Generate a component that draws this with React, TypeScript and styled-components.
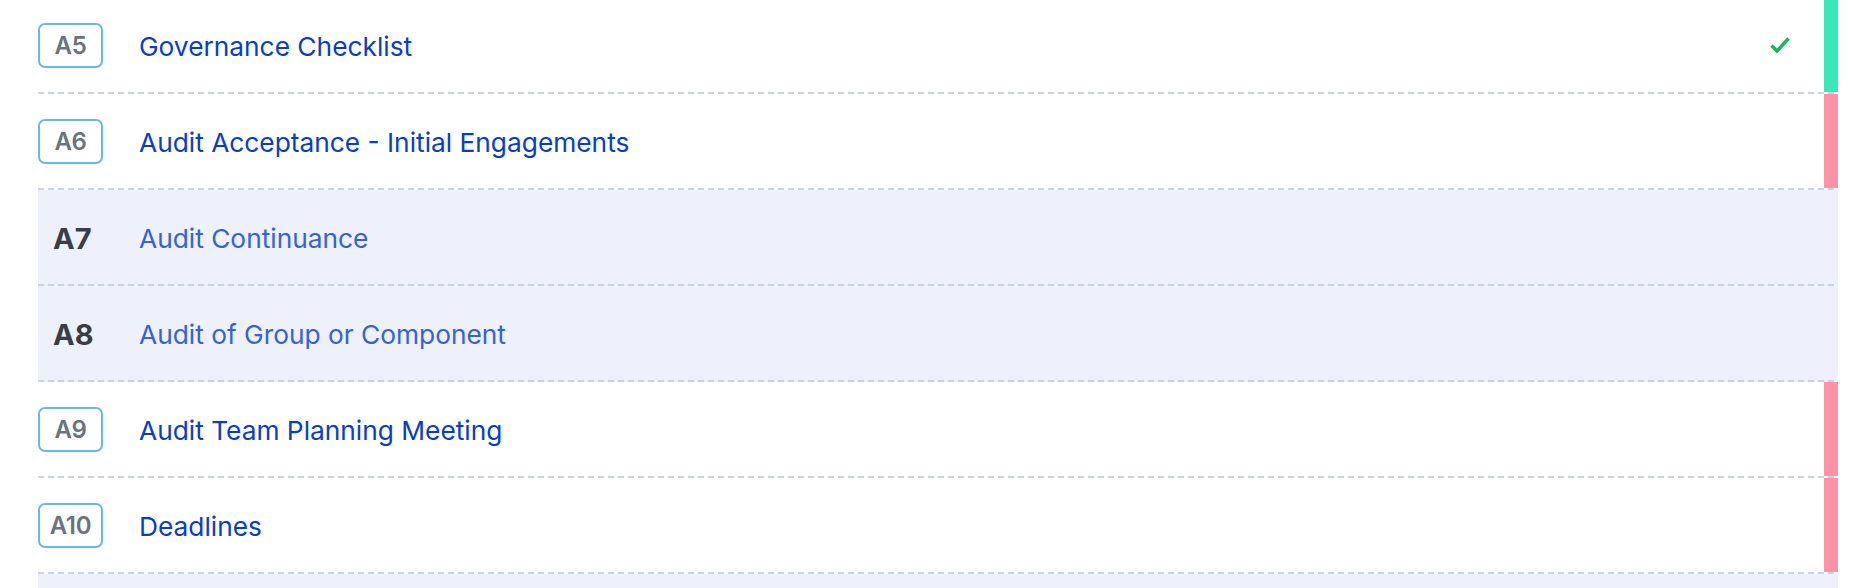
import React from "react"
import styled, { createGlobalStyle } from "styled-components"

const GlobalStyle = createGlobalStyle`
  html, body {
    margin: 0;
    padding: 0;
    background: #ffffff;
    overflow: hidden;
  }
  body {
    font-family: Inter, "Noto Sans", "Liberation Sans", sans-serif;
  }
`

type Status = "done" | "pending" | "none"

type Item = {
  code: string
  title: string
  group?: boolean
  status: Status
}

const items: Item[] = [
  { code: "A5", title: "Governance Checklist", status: "done" },
  { code: "A6", title: "Audit Acceptance - Initial Engagements", status: "pending" },
  { code: "A7", title: "Audit Continuance", group: true, status: "none" },
  { code: "A8", title: "Audit of Group or Component", group: true, status: "none" },
  { code: "A9", title: "Audit Team Planning Meeting", status: "pending" },
  { code: "A10", title: "Deadlines", status: "pending" },
  // next group row, only its top edge is visible
  { code: "", title: "", group: true, status: "none" },
]

const CheckIcon = () => (
  <svg width="20" height="18" viewBox="0 0 20 18" fill="none">
    <path
      d="M1.5 9.5 L7 15 L18.5 2.5"
      stroke="#14b85a"
      strokeWidth="3.4"
      strokeLinecap="butt"
      strokeLinejoin="miter"
    />
  </svg>
)

const App = () => {
  return (
    <>
      <GlobalStyle />
      <List>
        {items.map((item, i) => (
          <Row key={item.code || i} group={item.group}>
            <KeyCell>
              {item.group ? (
                <GroupCode>{item.code}</GroupCode>
              ) : (
                <Badge>{item.code}</Badge>
              )}
            </KeyCell>
            <Title group={item.group}>{item.title}</Title>
            <Tick>{item.status === "done" && <CheckIcon />}</Tick>
            <StatusBar status={item.status} />
          </Row>
        ))}
      </List>
    </>
  )
}

export default App

const List = styled.div`
  display: flex;
  flex-direction: column;
  width: 1800px;
  margin: -2px 0 0 38px;
`

const Row = styled.div<{ group?: boolean }>`
  display: flex;
  align-items: center;
  height: 96px;
  box-sizing: border-box;
  padding-bottom: 2px;
  background-color: ${p => (p.group ? "#eef0fc" : "#ffffff")};
  background-image: repeating-linear-gradient(
    to right,
    #c9d2df 0 6px,
    transparent 6px 10px
  );
  background-size: 100% 2px;
  background-position: left bottom;
  background-repeat: no-repeat;
`

const KeyCell = styled.div`
  flex: 0 0 101px;
  display: flex;
  align-items: center;
`

const Badge = styled.div`
  box-sizing: border-box;
  width: 65px;
  height: 45px;
  border: 2px solid #6cb7e3;
  border-radius: 7px;
  display: flex;
  align-items: center;
  justify-content: center;
  font-size: 24px;
  font-weight: 600;
  color: #6b7280;
  letter-spacing: -0.3px;
`

const GroupCode = styled.div`
  padding: 2px 0 0 15px;
  font-size: 29px;
  font-weight: 700;
  color: #3a3d47;
`

const Title = styled.div<{ group?: boolean }>`
  flex: 1;
  padding: 3px 0 0 0;
  font-size: 26.3px;
  font-weight: 400;
  color: ${p => (p.group ? "#3563d1" : "#0a3ec0")};
`

const Tick = styled.div`
  flex: 0 0 20px;
  height: 18px;
  margin-right: 34px;
  display: flex;
`

const StatusBar = styled.div<{ status: Status }>`
  align-self: stretch;
  flex: 0 0 14px;
  background: ${p =>
    p.status === "done"
      ? "#38e9b7"
      : p.status === "pending"
      ? "#ff92a5"
      : "transparent"};
`
